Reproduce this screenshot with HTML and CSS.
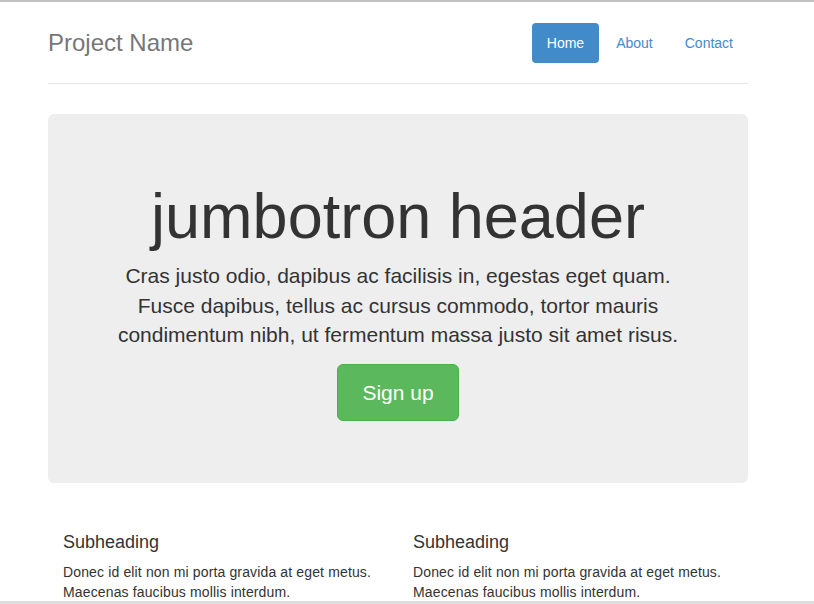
FILE: index.html
```html
<!DOCTYPE html>
<html lang="en">
<head>
<meta charset="utf-8">
<title>Narrow Jumbotron</title>
<link rel="stylesheet" href="styles.css">
</head>
<body>
<div class="page">
  <div class="container">
    <header class="header">
      <h3 class="brand">Project Name</h3>
      <ul class="nav">
        <li><a class="pill active" href="#">Home</a></li>
        <li><a class="pill" href="#">About</a></li>
        <li><a class="pill" href="#">Contact</a></li>
      </ul>
    </header>

    <section class="jumbotron">
      <h1 class="jumbo-title">jumbotron header</h1>
      <p class="lead">Cras justo odio, dapibus ac facilisis in, egestas eget quam. Fusce dapibus, tellus ac cursus commodo, tortor mauris condimentum nibh, ut fermentum massa justo sit amet risus.</p>
      <p class="cta"><a class="btn-signup" href="#">Sign up</a></p>
    </section>

    <section class="marketing">
      <div class="col">
        <h4 class="subheading">Subheading</h4>
        <p class="copy">Donec id elit non mi porta gravida at eget metus. Maecenas faucibus mollis interdum.</p>
      </div>
      <div class="col">
        <h4 class="subheading">Subheading</h4>
        <p class="copy">Donec id elit non mi porta gravida at eget metus. Maecenas faucibus mollis interdum.</p>
      </div>
    </section>
  </div>
</div>
<div class="frame-bottom"></div>
</body>
</html>
```

FILE: styles.css
```css
html {
  border-top: 2px solid #c2c2c2;
}
body {
  margin: 0;
  padding-top: 21px;
  font-family: "Liberation Sans", Arial, Helvetica, sans-serif;
  font-size: 14px;
  line-height: 1.428571;
  color: #333;
  background: #fff;
}
.page {
  width: 796px;
}
.container {
  max-width: 730px;
  margin: 0 auto;
  padding: 0 15px;
  box-sizing: border-box;
}
.header {
  display: flex;
  justify-content: space-between;
  align-items: flex-start;
  padding-bottom: 20px;
  border-bottom: 1px solid #e5e5e5;
  margin-bottom: 30px;
}
.brand {
  margin: 0;
  font-size: 24px;
  font-weight: 500;
  line-height: 40px;
  color: #777;
}
.nav {
  display: flex;
  list-style: none;
  margin: 0;
  padding: 0;
  gap: 2px;
}
.pill {
  display: block;
  padding: 10px 15px;
  line-height: 20px;
  font-size: 14px;
  color: #428bca;
  text-decoration: none;
  border-radius: 4px;
}
.pill.active {
  background: #428bca;
  color: #fff;
}
.jumbotron {
  background: #eee;
  border-radius: 6px;
  padding: 48px 60px;
  text-align: center;
  margin-bottom: 40px;
}
.jumbo-title {
  margin: 20px 0 10px;
  font-size: 63px;
  font-weight: 500;
  line-height: 1.1;
  color: #333;
}
.lead {
  margin: 0 0 15px;
  font-size: 21px;
  font-weight: 200;
  line-height: 1.4;
}
.cta {
  margin: 0 0 14px;
}
.btn-signup {
  display: inline-block;
  padding: 14px 24px;
  font-size: 21px;
  line-height: 27px;
  color: #fff;
  background: #5cb85c;
  border: 1px solid #4cae4c;
  border-radius: 6px;
  text-decoration: none;
}
.marketing {
  display: grid;
  grid-template-columns: 1fr 1fr;
}
.col {
  padding: 0 15px;
}
.subheading {
  margin: 10px 0 10px;
  font-size: 18px;
  font-weight: 500;
  line-height: 1.1;
}
.copy {
  margin: 0 0 10px;
  letter-spacing: 0.14px;
}
.frame-bottom {
  position: fixed;
  left: 0;
  right: 0;
  bottom: 0;
  height: 3px;
  background: #dedede;
}
```
